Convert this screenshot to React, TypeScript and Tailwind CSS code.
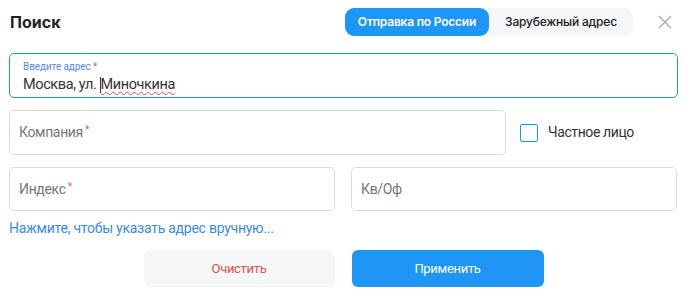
import React from "react";

export default function App() {
  return (
    <div
      className="w-[687px] h-[297px] bg-white px-[9px] pt-[8px] text-[#333]"
      style={{ fontFamily: "Roboto, 'Noto Sans', sans-serif" }}
    >
      {/* Header */}
      <div className="flex items-center h-[28px]">
        <div
          className="ml-[1px] text-[16px] font-bold text-[#222] leading-none"
          style={{ fontFamily: "Inter, Roboto, sans-serif" }}
        >
          Поиск
        </div>
        <div
          className="ml-auto flex h-[28px] rounded-[9px] bg-[#f5f6f8] text-[12px] font-semibold tracking-[-0.2px]"
          style={{ fontFamily: "Inter, Roboto, sans-serif" }}
        >
          <div className="w-[144px] h-full rounded-[9px] bg-[#1e96f5] text-white flex items-center justify-center">
            Отправка по России
          </div>
          <div className="w-[144px] h-full flex items-center justify-center text-[#222] font-medium">
            Зарубежный адрес
          </div>
        </div>
        <svg
          className="ml-[25px] mr-[6px]"
          width="14"
          height="14"
          viewBox="0 0 14 14"
          fill="none"
          stroke="#a3abb5"
          strokeWidth="1.3"
        >
          <path d="M1 1L13 13M13 1L1 13" />
        </svg>
      </div>

      {/* Address field */}
      <div className="mt-[17px] h-[45px] rounded-[5px] border border-[#1e96f5] px-[13px] pt-[7px]">
        <div className="text-[10px] leading-[12px] text-[#5b87e8] tracking-[-0.1px]">
          Введите адрес <span className="text-[#e35d5d]">*</span>
        </div>
        <div className="text-[14.5px] leading-[20px] text-[#333] mt-[2px] flex items-center tracking-[-0.4px]">
          <span>Москва, ул.&nbsp;</span>
          <span className="inline-block w-px h-[16px] bg-[#333]" />
          <span className="underline decoration-wavy decoration-[#e05050] decoration-1 underline-offset-2">
            Миночкина
          </span>
        </div>
      </div>

      {/* Company row */}
      <div className="mt-[12px] flex items-center">
        <div className="w-[497px] h-[45px] rounded-[5px] border border-[#dcdcdc] flex items-center px-[9px] text-[14px] text-[#777] tracking-[-0.35px]">
          Компания<span className="text-[#e35d5d] text-[10px] ml-[2px] -mt-[6px]">*</span>
        </div>
        <div className="ml-[14px] w-[18px] h-[18px] rounded-[2px] border-[1.5px] border-[#1e96f5]" />
        <div className="ml-[10px] text-[14px] text-[#333] tracking-[-0.4px]">Частное лицо</div>
      </div>

      {/* Index row */}
      <div className="mt-[12px] flex gap-[16px]">
        <div className="w-[326px] h-[44px] rounded-[5px] border border-[#dcdcdc] flex items-center px-[9px] text-[14px] text-[#777] tracking-[-0.35px]">
          Индекс<span className="text-[#e35d5d] text-[10px] ml-[2px] -mt-[6px]">*</span>
        </div>
        <div className="w-[326px] h-[44px] rounded-[5px] border border-[#dcdcdc] flex items-center px-[9px] text-[14px] text-[#777] tracking-[-0.35px]">
          Кв/Оф
        </div>
      </div>

      {/* Link */}
      <div className="mt-[8px] text-[14px] leading-[18px] text-[#3a8be8] tracking-[-0.25px]">
        Нажмите, чтобы указать адрес вручную...
      </div>

      {/* Buttons */}
      <div className="mt-[13px] flex justify-center gap-[17px]">
        <div className="w-[191px] h-[37px] rounded-[6px] bg-[#f5f6f8] flex items-center justify-center text-[13px] text-[#e0524a] tracking-[-0.3px]">
          Очистить
        </div>
        <div className="w-[192px] h-[37px] rounded-[6px] bg-[#1e96f5] flex items-center justify-center text-[13px] text-white tracking-[-0.3px]">
          Применить
        </div>
      </div>
    </div>
  );
}
